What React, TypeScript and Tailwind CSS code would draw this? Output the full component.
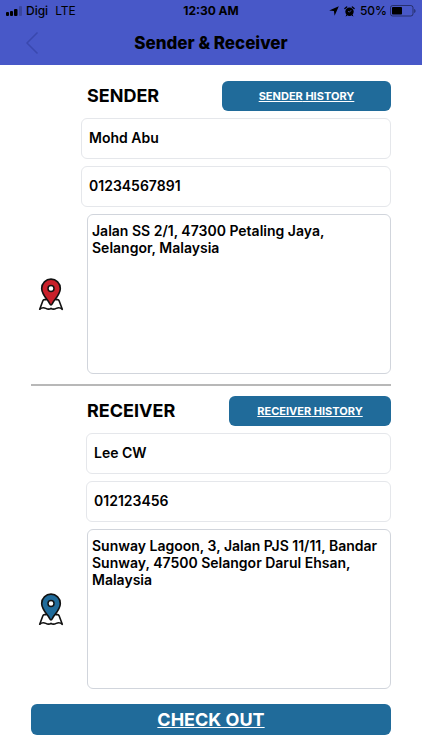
import React, { useState } from "react";

function SignalBars() {
  return (
    <svg width="17" height="12" viewBox="0 0 17 12" aria-hidden="true">
      <rect x="0" y="7" width="3" height="4" rx="1" />
      <rect x="4" y="6" width="3" height="5" rx="1" />
      <rect x="8" y="4" width="3.500" height="7" rx="1" />
      <rect x="13" y="1" width="3" height="10" rx="1" opacity="0.2" />
    </svg>
  );
}

function LocationArrow() {
  return (
    <svg width="10" height="10" viewBox="0 0 10 10" aria-hidden="true">
      <path d="M9.8.2 5.6 9.8 4.9 5.1.2 4.5z" />
    </svg>
  );
}

function AlarmClock() {
  return (
    <svg width="11" height="11" viewBox="0 0 11 11" aria-hidden="true">
      <circle cx="5.5" cy="5.8" r="4.2" />
      <path d="M.9 2.500 2.700 1M10.100 2.500 8.300 1" stroke="black" strokeWidth="1.300" strokeLinecap="round" />
      <path d="M2.900 8.800 2.200 9.900M8.100 8.800l.7 1.100" stroke="black" strokeWidth="1" strokeLinecap="round" />
      <path d="M7.200 4.200 5.500 6.100 4 5.300" fill="none" stroke="#4858c8" strokeWidth="0.8" />
    </svg>
  );
}

function Battery() {
  return (
    <svg width="26" height="12" viewBox="0 0 26 12" aria-hidden="true">
      <rect x="0.5" y="0.5" width="22.5" height="10.5" rx="2.2" fill="none" stroke="black" strokeOpacity="0.45" />
      <rect x="2" y="2" width="10" height="7.5" rx="0.8" />
      <path d="M24.2 4v4c.9-.3 1.3-1 1.3-2s-.4-1.700-1.300-2z" opacity="0.45" />
    </svg>
  );
}

function MapPin({ color }: { color: string }) {
  return (
    <svg width="26" height="34" viewBox="0 0 26 34" fill="none" stroke="#111" strokeLinejoin="round" strokeLinecap="round" aria-hidden="true">
      <path
        d="M8.200 22.600H6.400Q5.300 22.600 4.900 23.700L1.700 32.300c2-1.900 4.300-1.800 6.100-.9 1.600.8 3.400 1.300 5.200-.1 1.800 1.400 3.600.9 5.200.1 1.800-.9 4.100-1 6.100.9L21.100 23.700Q20.700 22.600 19.600 22.600h-1.800"
        fill="white"
        strokeWidth="1.6"
      />
      <path
        d="M13 28C12.200 28 11.700 26.500 10.900 25.200 8.300 21.300 3.700 16.700 3.700 11.400a9.300 9.300 0 0 1 18.600 0C22.300 16.700 17.700 21.300 15.100 25.200 14.300 26.500 13.800 28 13 28z"
        fill={color}
        strokeWidth="1.6"
      />
      <circle cx="13" cy="11.400" r="3" fill="white" strokeWidth="1.500" />
    </svg>
  );
}

interface Contact {
  name: string;
  phone: string;
  address: string;
}

interface ContactSectionProps {
  id: string;
  title: string;
  pinColor: string;
  initial: Contact;
  buttonClass: string;
  fieldsClass: string;
}

function ContactSection({ id, title, pinColor, initial, buttonClass, fieldsClass }: ContactSectionProps) {
  const [contact, setContact] = useState<Contact>(initial);
  const field = "block w-full h-[41px] rounded-md border border-gray-200 bg-white px-[7px] pb-[2px] text-[14px] font-semibold outline-none";

  return (
    <section className="flex flex-col gap-[7px]">
      <div className="flex items-center justify-between pl-14">
        <h2 className="text-[18px] leading-[30px] font-bold">{title}</h2>
        <button type="button" className={`h-[30px] rounded-md bg-[#206b9a] text-[11px] font-bold text-white underline ${buttonClass}`}>
          {title} HISTORY
        </button>
      </div>
      <div className={`flex flex-col gap-[7px] ${fieldsClass}`}>
        <input
          id={`${id}-name`}
          aria-label={`${title} name`}
          className={field}
          value={contact.name}
          onChange={(e) => setContact({ ...contact, name: e.target.value })}
        />
        <input
          id={`${id}-phone`}
          aria-label={`${title} phone`}
          type="tel"
          className={field}
          value={contact.phone}
          onChange={(e) => setContact({ ...contact, phone: e.target.value })}
        />
      </div>
      <div className="flex items-center gap-[17px]">
        <button type="button" aria-label={`${title} location`} className="flex w-[39px] shrink-0 justify-center">
          <MapPin color={pinColor} />
        </button>
        <textarea
          id={`${id}-address`}
          aria-label={`${title} address`}
          className="block h-40 min-w-0 flex-1 resize-none rounded-md border border-gray-300 bg-white px-1 py-[7px] text-[14px] leading-[17px] font-semibold outline-none"
          value={contact.address}
          onChange={(e) => setContact({ ...contact, address: e.target.value })}
        />
      </div>
    </section>
  );
}

export default function App() {
  return (
    <div className="min-h-screen bg-white font-['Inter',sans-serif] text-black">
      <header className="bg-[#4858c8]">
        <div className="grid grid-cols-3 items-center px-[6px] pt-[3px] text-[12px] leading-4">
          <div className="flex items-center gap-[3px]">
            <SignalBars />
            <span className="font-medium">Digi</span>
            <span className="ml-1">LTE</span>
          </div>
          <div className="text-center font-bold">12:30 AM</div>
          <div className="flex items-center justify-end gap-[5px]">
            <LocationArrow />
            <AlarmClock />
            <div className="flex items-center gap-[3px]">
              <span className="font-medium">50%</span>
              <Battery />
            </div>
          </div>
        </div>
        <div className="grid grid-cols-[40px_1fr_40px] items-center px-3 pt-1 pb-[2px]">
          <button type="button" aria-label="Back" className="flex h-10 items-center justify-center">
            <svg width="14" height="24" viewBox="0 0 14 24" fill="none" stroke="#3a48ae" strokeWidth="1.500" aria-hidden="true">
              <path d="M12.500 1.500 2 12l10.500 10.500" />
            </svg>
          </button>
          <h1 className="pt-[2px] text-center text-[17px] font-extrabold">Sender &amp; Receiver</h1>
        </div>
      </header>

      <main className="flex flex-col px-[31px] pt-4 pb-4">
        <ContactSection
          id="sender"
          title="SENDER"
          pinColor="#c8202a"
          initial={{
            name: "Mohd Abu",
            phone: "01234567891",
            address: "Jalan SS 2/1, 47300 Petaling Jaya, Selangor, Malaysia",
          }}
          buttonClass="w-[169px]"
          fieldsClass="pl-[50px]"
        />
        <hr className="my-[10px] border-t-2 border-[#b8b8b8]" />
        <ContactSection
          id="receiver"
          title="RECEIVER"
          pinColor="#206b9a"
          initial={{
            name: "Lee CW",
            phone: "012123456",
            address: "Sunway Lagoon, 3, Jalan PJS 11/11, Bandar Sunway, 47500 Selangor Darul Ehsan, Malaysia",
          }}
          buttonClass="w-[162px]"
          fieldsClass="pl-[55px]"
        />
        <button type="button" className="mt-[15px] h-[31px] w-full rounded-md bg-[#206b9a] pb-px text-[18px] font-bold text-white underline">
          CHECK OUT
        </button>
      </main>
    </div>
  );
}
